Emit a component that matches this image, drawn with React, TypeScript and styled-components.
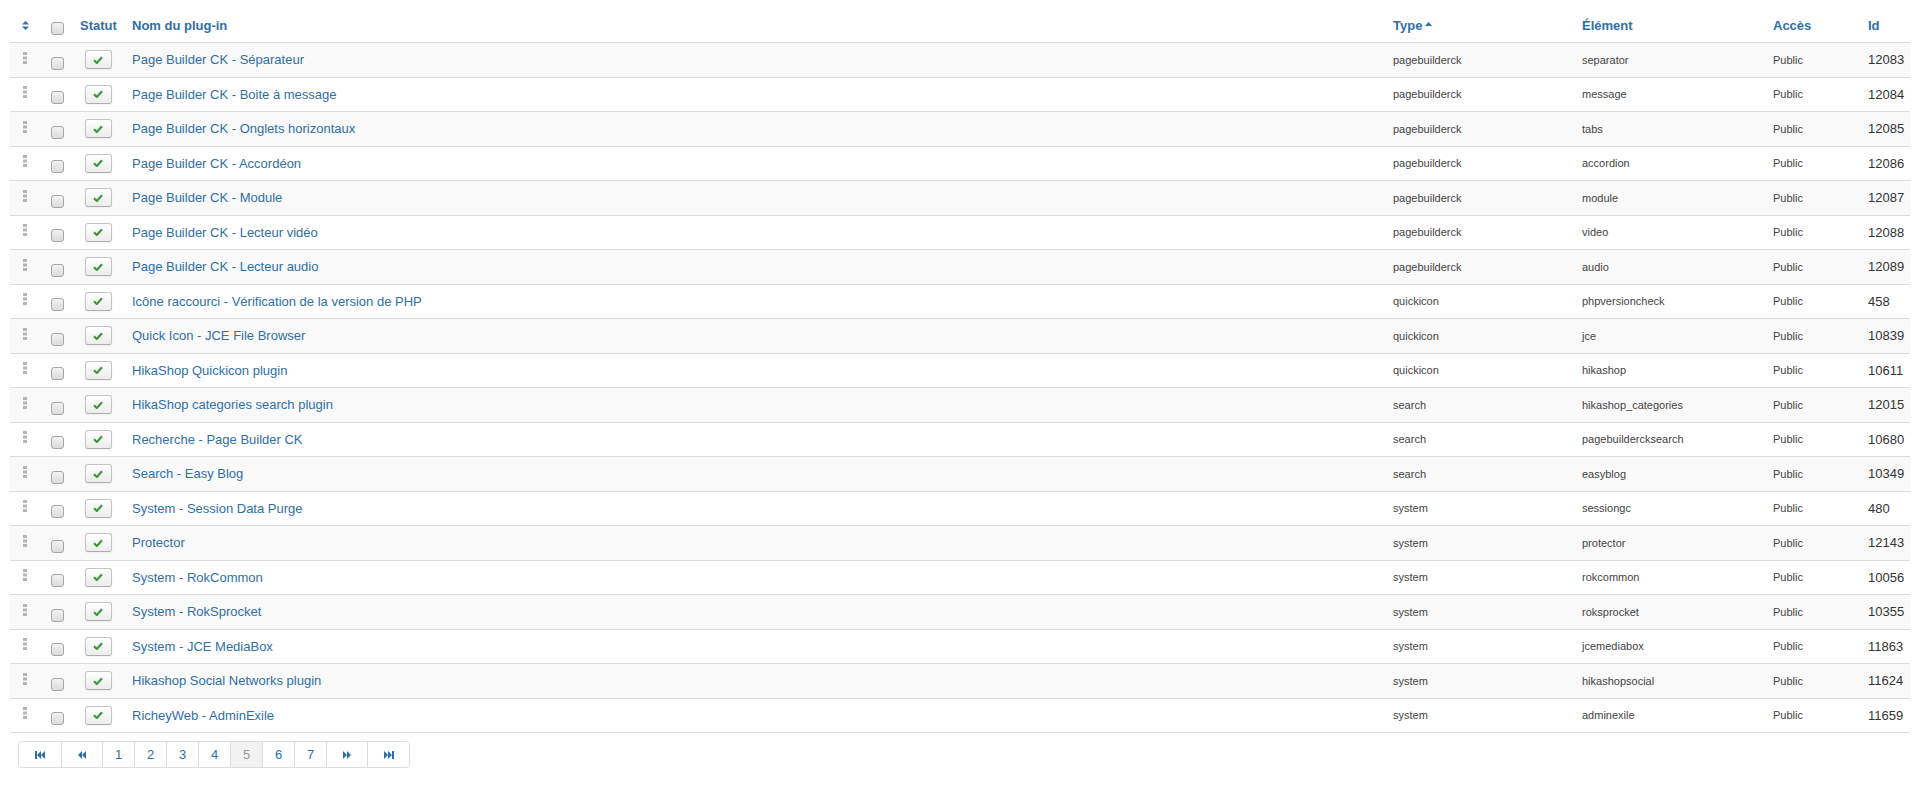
import React from 'react';
import styled, { createGlobalStyle } from 'styled-components';

const GlobalStyle = createGlobalStyle`
  html, body {
    margin: 0;
    padding: 0;
    background: #fff;
  }
  body {
    font-family: "Liberation Sans", Arial, sans-serif;
    font-size: 13px;
    color: #333;
  }
`;

const COLS = '33px 29px 52px 1fr 189px 191px 95px 50px';
const BLUE = '#2f6fa6';

const Page = styled.div`
  padding: 8px 10px 0 10px;
`;

const HeadRow = styled.div`
  display: grid;
  grid-template-columns: ${COLS};
  height: 34px;
`;

const HeadCell = styled.div<{ $center?: boolean }>`
  display: flex;
  align-items: center;
  justify-content: ${(p) => (p.$center ? 'center' : 'flex-start')};
  padding: 0 8px;
  font-weight: bold;
  color: ${BLUE};
  white-space: nowrap;
`;

const Row = styled.div<{ $striped: boolean }>`
  display: grid;
  grid-template-columns: ${COLS};
  height: 34.5px;
  box-sizing: border-box;
  border-top: 1px solid #ddd;
  background: ${(p) => (p.$striped ? '#f9f9f9' : '#fff')};
`;

const Cell = styled.div<{ $center?: boolean }>`
  display: flex;
  align-items: center;
  justify-content: ${(p) => (p.$center ? 'center' : 'flex-start')};
  padding: 0 8px;
  white-space: nowrap;
  overflow: hidden;
`;

const IconSlot = styled.span<{ $up?: number }>`
  display: flex;
  justify-content: center;
  width: 14px;
  margin-bottom: ${(p) => p.$up || 0}px;
`;

const Check = styled.input.attrs({ type: 'checkbox' })`
  appearance: none;
  margin: 7px 0 0 0;
  width: 13px;
  height: 13px;
  box-sizing: border-box;
  border: 1px solid #a6a6a6;
  border-radius: 3px;
  background: linear-gradient(#f2f2f2, #dcdcdc);
`;

const StatusBtn = styled.span`
  display: flex;
  align-items: center;
  justify-content: center;
  width: 27px;
  height: 19px;
  box-sizing: border-box;
  border: 1px solid #c4c4c4;
  border-bottom-color: #adadad;
  border-radius: 3px;
  background: linear-gradient(#ffffff, #ececec);
  box-shadow: 0 1px 2px rgba(0, 0, 0, 0.05);
`;

const NameLink = styled.span`
  color: ${BLUE};
`;

const Small = styled.span`
  font-size: 11px;
  color: #444;
`;

const Footer = styled.div`
  border-top: 1px solid #ddd;
  padding: 8px 0 0 8px;
`;

const Pager = styled.ul`
  display: inline-flex;
  margin: 0;
  padding: 0;
  list-style: none;
  height: 27px;
  box-sizing: border-box;
  border: 1px solid #ddd;
  border-radius: 4px;
  box-shadow: 0 1px 2px rgba(0, 0, 0, 0.05);
  overflow: hidden;
`;

const PageItem = styled.li<{ $w: number; $active?: boolean }>`
  display: flex;
  align-items: center;
  justify-content: center;
  box-sizing: border-box;
  width: ${(p) => p.$w}px;
  border-left: 1px solid #ddd;
  font-size: 13px;
  color: ${(p) => (p.$active ? '#999' : BLUE)};
  background: ${(p) => (p.$active ? '#f2f2f2' : '#fff')};
  &:first-child {
    border-left: 0;
  }
`;

const SortIcon = () => (
  <svg width="7" height="9" viewBox="0 0 7 9">
    <polygon points="0,3.5 3.5,0 7,3.5" fill={BLUE} />
    <polygon points="0,5.5 3.5,9 7,5.5" fill={BLUE} />
  </svg>
);

const Caret = styled.svg`
  margin-left: 3px;
  margin-bottom: 3px;
`;

const DragHandle = () => (
  <svg width="4" height="12" viewBox="0 0 4 12">
    <rect x="0" y="0" width="4" height="3" fill="#b5b5b5" />
    <rect x="0" y="4.5" width="4" height="3" fill="#b5b5b5" />
    <rect x="0" y="9" width="4" height="3" fill="#b5b5b5" />
  </svg>
);

const Tick = () => (
  <svg width="10" height="8" viewBox="0 0 10 8">
    <path d="M1 4.2 L3.8 7 L9 1.2" fill="none" stroke="#3f973f" strokeWidth="2.2" />
  </svg>
);

const First = () => (
  <svg width="10" height="8" viewBox="0 0 10 8">
    <rect x="0" y="0" width="2" height="8" fill={BLUE} />
    <polygon points="6,0 2,4 6,8" fill={BLUE} />
    <polygon points="10,0 6,4 10,8" fill={BLUE} />
  </svg>
);
const Prev = () => (
  <svg width="8" height="8" viewBox="0 0 8 8">
    <polygon points="4,0 0,4 4,8" fill={BLUE} />
    <polygon points="8,0 4,4 8,8" fill={BLUE} />
  </svg>
);
const Next = () => (
  <svg width="8" height="8" viewBox="0 0 8 8">
    <polygon points="0,0 4,4 0,8" fill={BLUE} />
    <polygon points="4,0 8,4 4,8" fill={BLUE} />
  </svg>
);
const Last = () => (
  <svg width="10" height="8" viewBox="0 0 10 8">
    <polygon points="0,0 4,4 0,8" fill={BLUE} />
    <polygon points="4,0 8,4 4,8" fill={BLUE} />
    <rect x="8" y="0" width="2" height="8" fill={BLUE} />
  </svg>
);

interface IPlugin {
  name: string;
  type: string;
  element: string;
  id: number;
}

const plugins: IPlugin[] = [
  { name: 'Page Builder CK - Séparateur', type: 'pagebuilderck', element: 'separator', id: 12083 },
  { name: 'Page Builder CK - Boite à message', type: 'pagebuilderck', element: 'message', id: 12084 },
  { name: 'Page Builder CK - Onglets horizontaux', type: 'pagebuilderck', element: 'tabs', id: 12085 },
  { name: 'Page Builder CK - Accordéon', type: 'pagebuilderck', element: 'accordion', id: 12086 },
  { name: 'Page Builder CK - Module', type: 'pagebuilderck', element: 'module', id: 12087 },
  { name: 'Page Builder CK - Lecteur vidéo', type: 'pagebuilderck', element: 'video', id: 12088 },
  { name: 'Page Builder CK - Lecteur audio', type: 'pagebuilderck', element: 'audio', id: 12089 },
  { name: 'Icône raccourci - Vérification de la version de PHP', type: 'quickicon', element: 'phpversioncheck', id: 458 },
  { name: 'Quick Icon - JCE File Browser', type: 'quickicon', element: 'jce', id: 10839 },
  { name: 'HikaShop Quickicon plugin', type: 'quickicon', element: 'hikashop', id: 10611 },
  { name: 'HikaShop categories search plugin', type: 'search', element: 'hikashop_categories', id: 12015 },
  { name: 'Recherche - Page Builder CK', type: 'search', element: 'pagebuildercksearch', id: 10680 },
  { name: 'Search - Easy Blog', type: 'search', element: 'easyblog', id: 10349 },
  { name: 'System - Session Data Purge', type: 'system', element: 'sessiongc', id: 480 },
  { name: 'Protector', type: 'system', element: 'protector', id: 12143 },
  { name: 'System - RokCommon', type: 'system', element: 'rokcommon', id: 10056 },
  { name: 'System - RokSprocket', type: 'system', element: 'roksprocket', id: 10355 },
  { name: 'System - JCE MediaBox', type: 'system', element: 'jcemediabox', id: 11863 },
  { name: 'Hikashop Social Networks plugin', type: 'system', element: 'hikashopsocial', id: 11624 },
  { name: 'RicheyWeb - AdminExile', type: 'system', element: 'adminexile', id: 11659 },
];

const pages: Array<{ label: React.ReactNode; w: number; active?: boolean }> = [
  { label: <First />, w: 42 },
  { label: <Prev />, w: 41 },
  { label: '1', w: 32 },
  { label: '2', w: 32 },
  { label: '3', w: 32 },
  { label: '4', w: 32 },
  { label: '5', w: 32, active: true },
  { label: '6', w: 32 },
  { label: '7', w: 32 },
  { label: <Next />, w: 41 },
  { label: <Last />, w: 42 },
];

const App: React.FC = () => {
  return (
    <Page>
      <GlobalStyle />
      <HeadRow>
        <HeadCell>
          <IconSlot>
            <SortIcon />
          </IconSlot>
        </HeadCell>
        <HeadCell $center>
          <Check />
        </HeadCell>
        <HeadCell>Statut</HeadCell>
        <HeadCell>Nom du plug-in</HeadCell>
        <HeadCell>
          Type
          <Caret width="7" height="4" viewBox="0 0 7 4">
            <polygon points="0,4 3.5,0 7,4" fill={BLUE} />
          </Caret>
        </HeadCell>
        <HeadCell>Élément</HeadCell>
        <HeadCell>Accès</HeadCell>
        <HeadCell>Id</HeadCell>
      </HeadRow>
      {plugins.map((p, i) => (
        <Row key={p.id} $striped={i % 2 === 0}>
          <Cell>
            <IconSlot $up={4}>
              <DragHandle />
            </IconSlot>
          </Cell>
          <Cell $center>
            <Check />
          </Cell>
          <Cell $center>
            <StatusBtn>
              <Tick />
            </StatusBtn>
          </Cell>
          <Cell>
            <NameLink>{p.name}</NameLink>
          </Cell>
          <Cell>
            <Small>{p.type}</Small>
          </Cell>
          <Cell>
            <Small>{p.element}</Small>
          </Cell>
          <Cell>
            <Small>Public</Small>
          </Cell>
          <Cell>{p.id}</Cell>
        </Row>
      ))}
      <Footer>
        <Pager>
          {pages.map((pg, i) => (
            <PageItem key={i} $w={pg.w} $active={pg.active}>
              {pg.label}
            </PageItem>
          ))}
        </Pager>
      </Footer>
    </Page>
  );
};

export default App;
